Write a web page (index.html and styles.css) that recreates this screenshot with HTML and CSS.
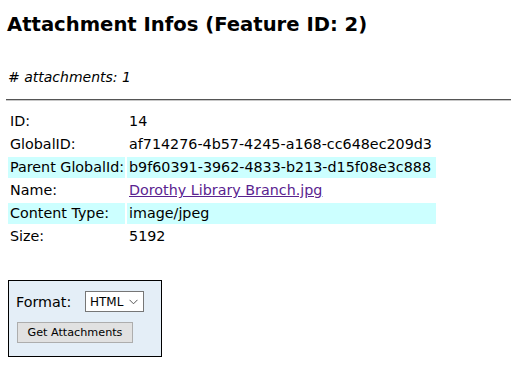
FILE: index.html
```html
<!DOCTYPE html>
<html>
<head>
<meta charset="utf-8">
<link rel="stylesheet" href="styles.css">
</head>
<body>
<h1 class="title">Attachment Infos (Feature ID: 2)</h1>
<p class="count"># attachments: 1</p>
<hr class="rule">
<table class="info">
  <tr><td>ID:</td><td>14</td></tr>
  <tr><td>GlobalID:</td><td>af714276-4b57-4245-a168-cc648ec209d3</td></tr>
  <tr class="hl"><td>Parent GlobalId:</td><td>b9f60391-3962-4833-b213-d15f08e3c888</td></tr>
  <tr><td>Name:</td><td><a class="link" href="#">Dorothy Library Branch.jpg</a></td></tr>
  <tr class="hl"><td>Content Type:</td><td>image/jpeg</td></tr>
  <tr><td>Size:</td><td>5192</td></tr>
</table>
<div class="panel">
  <div class="format-row">
    <span class="label">Format:</span>
    <span class="select-wrap">
      <select class="select"><option>HTML</option></select>
      <svg class="chev" width="9" height="6" viewBox="0 0 9 6"><path d="M0.5 0.8 L4.5 4.8 L8.5 0.8" fill="none" stroke="#555" stroke-width="1"/></svg>
    </span>
  </div>
  <button class="btn">Get Attachments</button>
</div>
</body>
</html>
```
FILE: styles.css
```css
html, body {
  margin: 0;
  padding: 0;
  background: #fff;
}
body {
  padding: 14px 0 0 6px;
  font-family: "DejaVu Sans", Verdana, sans-serif;
  font-size: 14.3px;
  color: #000;
}
.title {
  font-size: 19.6px;
  font-weight: bold;
  margin: 0 0 0 1px;
  line-height: 22px;
}
.count {
  font-style: italic;
  font-size: 14px;
  margin: 33px 0 0 2px;
  line-height: 16px;
}
.rule {
  margin: 14px 0 8px 0;
  border: 0;
  border-top: 1px solid #555;
  border-bottom: 1px solid #c8c8c8;
  height: 0;
}
.info {
  border-spacing: 2px;
  border-collapse: separate;
}
.info td {
  padding: 3px 4px 3px 2px;
  line-height: 15px;
  white-space: nowrap;
}
.info td:first-child {
  width: 113px;
  padding-right: 1px;
}
.info tr.hl td {
  background: #ccffff;
}
.link {
  color: #5a2390;
}
.panel {
  margin: 31px 0 0 2px;
  width: 152px;
  height: 75px;
  border: 1px solid #000;
  background: #e4eef7;
  display: flex;
  flex-direction: column;
  align-items: flex-start;
}
.format-row {
  display: flex;
  align-items: center;
  margin: 10px 0 0 7px;
}
.label {
  width: 69px;
}
.select-wrap {
  position: relative;
  display: inline-block;
}
.select {
  appearance: none;
  -webkit-appearance: none;
  width: 59px;
  height: 21px;
  border: 1px solid #767676;
  background: #fff;
  font-family: "DejaVu Sans", Verdana, sans-serif;
  font-size: 12px;
  padding: 0 0 0 4px;
  margin: 0;
  color: #000;
  border-radius: 0;
}
.chev {
  position: absolute;
  right: 6px;
  top: 8px;
  pointer-events: none;
}
.btn {
  margin: 10px 0 0 8px;
  width: 116px;
  height: 21px;
  border: 1px solid #adadad;
  background: #e1e1e1;
  font-family: "DejaVu Sans", Verdana, sans-serif;
  font-size: 11.2px;
  color: #000;
  padding: 0;
  border-radius: 0;
}
```
